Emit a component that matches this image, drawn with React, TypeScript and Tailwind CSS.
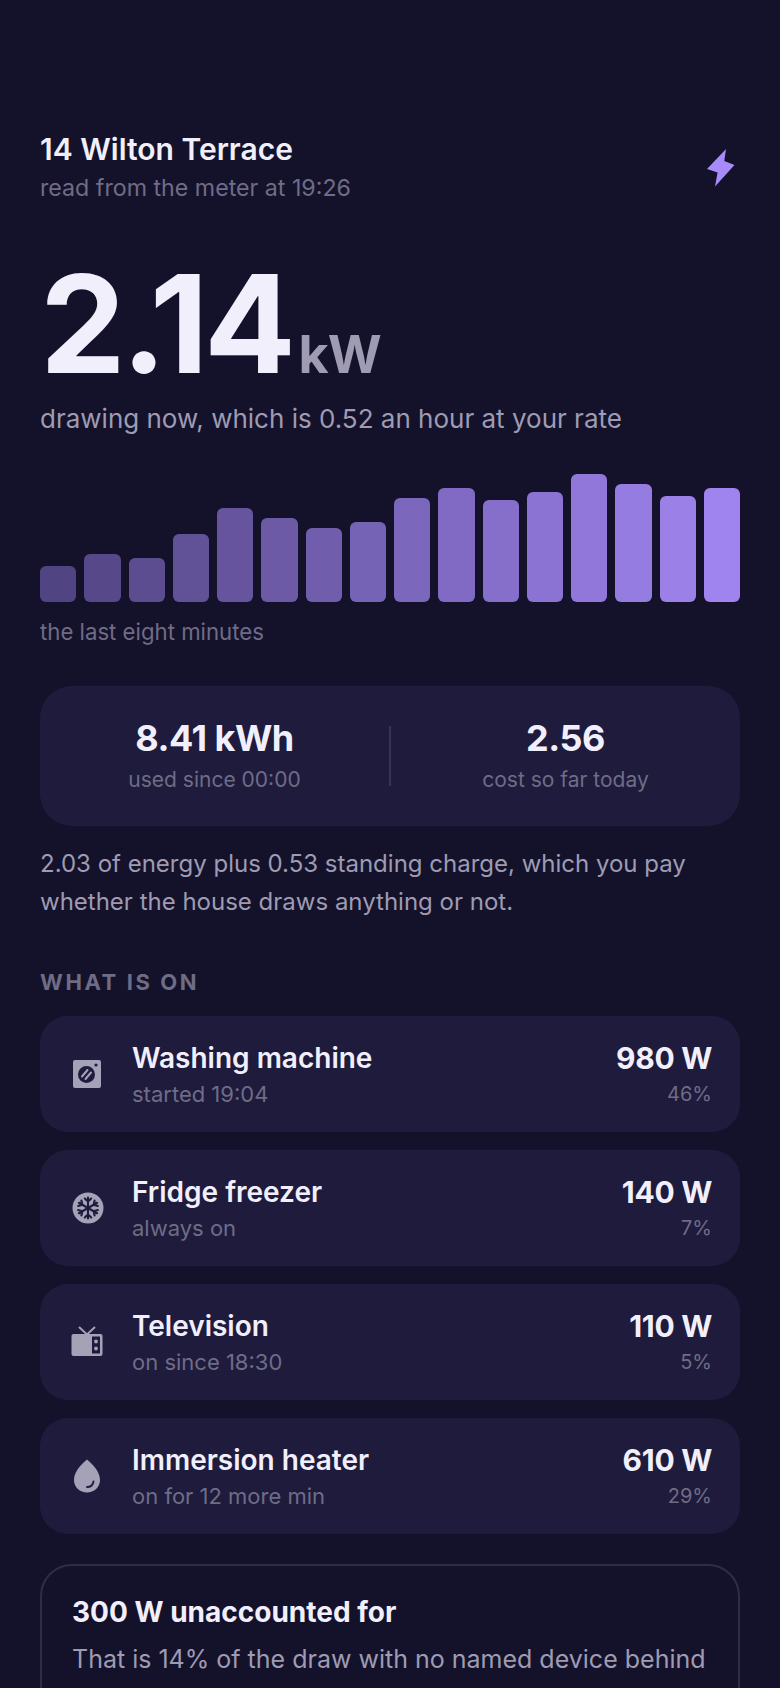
const bars = [36, 48, 44, 68, 94, 84, 74, 80, 104, 114, 102, 110, 128, 118, 106, 114];

function Bolt() {
  return (
    <svg viewBox="0 0 28 38" className="w-[28px] h-[38px] fill-[#a78bfa]">
      <path d="M19 0 L0 20 L10.6 23.6 L8 37.5 L27.5 16 L17.3 12 Z" />
    </svg>
  );
}
function Washer() {
  return (
    <svg viewBox="0 0 30 30" className="w-[30px] h-[30px]">
      <rect x="1" y="1" width="28" height="28" rx="2" fill="#a5a2b8" />
      <circle cx="14.5" cy="15.5" r="8.5" fill="#1e1b3d" />
      <path d="M10 17.5 L15.5 11 M13.5 20 L19 13.5" stroke="#a5a2b8" strokeWidth="2" strokeLinecap="round" />
      <circle cx="24" cy="6" r="1.6" fill="#1e1b3d" />
    </svg>
  );
}
function Snow() {
  return (
    <svg viewBox="0 0 32 32" className="w-[32px] h-[32px]">
      <circle cx="16" cy="16" r="15.5" fill="#a5a2b8" />
      <g stroke="#1e1b3d" strokeWidth="2.1" fill="none" strokeLinecap="round" strokeLinejoin="round">
        {[0, 60, 120, 180, 240, 300].map((a) => (
          <g key={a} transform={`rotate(${a} 16 16)`}>
            <path d="M16 16 V5.5 M12.8 6.5 L16 9.5 L19.2 6.5" />
          </g>
        ))}
      </g>
    </svg>
  );
}
function Tv() {
  return (
    <svg viewBox="0 0 32 32" className="w-[32px] h-[32px] -ml-[1px]">
      <path d="M8 1 L16 8.5 L24 1" stroke="#a5a2b8" strokeWidth="2" fill="none" />
      <rect x="0.5" y="8" width="31" height="22" rx="2" fill="#a5a2b8" />
      <rect x="21" y="10.5" width="8" height="17" fill="#1e1b3d" />
      <circle cx="25" cy="15.5" r="1.9" fill="#a5a2b8" />
      <circle cx="25" cy="22.5" r="1.9" fill="#a5a2b8" />
    </svg>
  );
}
function Drop() {
  return (
    <svg viewBox="0 0 28 34" className="w-[28px] h-[34px] ml-[1px]">
      <path d="M14 0.5 C9 5 1 12 1 21 C1 28.5 7 33.5 14 33.5 C21 33.5 27 28.5 27 21 C27 12 19 5 14 0.5 Z" fill="#a5a2b8" />
      <path d="M14 28 C17.5 28 20 26 20.5 22.5" stroke="#1e1b3d" strokeWidth="1.8" fill="none" strokeLinecap="round" />
    </svg>
  );
}

function Row({ icon, name, sub, watts, pct }: { icon: React.ReactNode; name: string; sub: string; watts: string; pct: string }) {
  return (
    <div className="h-[116px] rounded-[28px] bg-[#1e1b3d] flex items-center pl-[32px] pr-[28px]">
      <div className="w-[60px] shrink-0 flex items-center">{icon}</div>
      <div className="flex-1">
        <div className="text-[28px] leading-[38px] font-semibold text-[#f1effb]">{name}</div>
        <div className="text-[22px] leading-[32px] mt-[1px] text-[#6f6c86]">{sub}</div>
      </div>
      <div className="text-right">
        <div className="text-[30px] leading-[38px] font-bold text-[#f1effb] tracking-[-0.3px]">{watts}</div>
        <div className="text-[20px] leading-[32px] mt-[1px] text-[#6f6c86]">{pct}</div>
      </div>
    </div>
  );
}

export default function App() {
  return (
    <div className="h-[1688px] overflow-hidden bg-[#14122b] px-[40px] pt-[130px] font-['Inter',sans-serif]">
      <header className="flex items-center justify-between">
        <div>
          <h1 className="text-[30px] leading-[38px] font-semibold text-[#f1effb]">14 Wilton Terrace</h1>
          <p className="mt-[2px] text-[23.2px] leading-[36px] text-[#6f6c86]">read from the meter at 19:26</p>
        </div>
        <div className="mr-[5px]"><Bolt /></div>
      </header>

      <div className="mt-[43px] flex items-baseline">
        <span className="text-[136px] leading-[150px] font-bold text-[#f1effb] tracking-[-4.5px]">2.14</span>
        <span className="text-[52px] font-bold text-[#9e9bb3] ml-[7px] tracking-[-0.8px]">kW</span>
      </div>
      <p className="text-[26px] leading-[40px] text-[#9e9bb3]">drawing now, which is 0.52 an hour at your rate</p>

      <div className="mt-[35px] h-[128px] flex items-end gap-[8px]">
        {bars.map((h, i) => (
          <div key={i} className="flex-1 rounded-[6px] bg-[#a78bfa]" style={{ height: h, opacity: 0.42 + (0.53 * i) / 15 }} />
        ))}
      </div>
      <p className="mt-[14px] text-[22.2px] leading-[32px] text-[#6f6c86]">the last eight minutes</p>

      <section className="mt-[38px] h-[140px] rounded-[32px] bg-[#1e1b3d] flex items-center">
        <div className="flex-1 text-center">
          <div className="text-[36px] leading-[44px] font-bold text-[#f1effb] tracking-[-0.5px]">8.41 kWh</div>
          <div className="mt-[4px] text-[21px] leading-[32px] text-[#6f6c86]">used since 00:00</div>
        </div>
        <div className="w-[2px] h-[60px] bg-[#38354f]" />
        <div className="flex-1 text-center">
          <div className="text-[36px] leading-[44px] font-bold text-[#f1effb] tracking-[-0.5px]">2.56</div>
          <div className="mt-[4px] text-[21px] leading-[32px] text-[#6f6c86]">cost so far today</div>
        </div>
      </section>

      <p className="mt-[19px] text-[24px] leading-[38px] text-[#9e9bb3]">2.03 of energy plus 0.53 standing charge, which you pay whether the house draws anything or not.</p>

      <h2 className="mt-[46px] text-[22px] leading-[30px] font-bold tracking-[2.6px] text-[#6f6c86]">WHAT IS ON</h2>

      <div className="mt-[19px] flex flex-col gap-[18px]">
        <Row icon={<Washer />} name="Washing machine" sub="started 19:04" watts="980 W" pct="46%" />
        <Row icon={<Snow />} name="Fridge freezer" sub="always on" watts="140 W" pct="7%" />
        <Row icon={<Tv />} name="Television" sub="on since 18:30" watts="110 W" pct="5%" />
        <Row icon={<Drop />} name="Immersion heater" sub="on for 12 more min" watts="610 W" pct="29%" />
      </div>

      <section className="mt-[30px] rounded-[32px] border-2 border-[#2f2c49] px-[30px] pt-[27px] pb-[28px]">
        <h3 className="text-[28px] leading-[38px] font-bold text-[#f1effb]">300 W unaccounted for</h3>
        <p className="mt-[7px] text-[25px] leading-[42px] text-[#9e9bb3]">That is 14% of the draw with no named device behind it.</p>
      </section>
    </div>
  );
}
